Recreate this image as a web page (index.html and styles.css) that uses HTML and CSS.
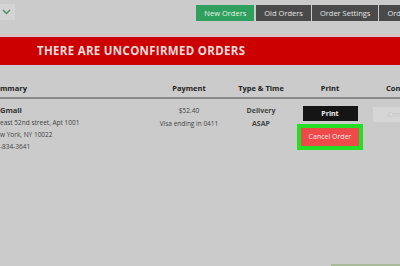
FILE: index.html
```html
<!DOCTYPE html>
<html>
<head>
<meta charset="utf-8">
<link rel="stylesheet" href="styles.css">
</head>
<body>
<div class="topbar">
  <div class="dropdown">
    <svg width="9" height="6" viewBox="0 0 9 6"><path d="M1 1 L4.5 4.5 L8 1" fill="none" stroke="#4f8a6a" stroke-width="1.4"/></svg>
  </div>
  <nav class="tabs">
    <span class="tab active">New Orders</span>
    <span class="tab">Old Orders</span>
    <span class="tab">Order Settings</span>
    <span class="tab">Order Details</span>
  </nav>
</div>
<div class="banner">THERE ARE UNCONFIRMED ORDERS</div>
<div class="table">
  <div class="row head">
    <div class="c-sum">mmary</div>
    <div class="c-mid">Payment</div>
    <div class="c-mid">Type &amp; Time</div>
    <div class="c-mid">Print</div>
    <div class="c-con">Confirm</div>
  </div>
  <div class="row body">
    <div class="c-sum">
      <div class="name">Gmail</div>
      <div class="line">east 52nd street, Apt 1001</div>
      <div class="line">w York, NY 10022</div>
      <div class="line">-834-3641</div>
    </div>
    <div class="c-mid pay">
      <div class="line">$52.40</div>
      <div class="line">Visa ending in 0411</div>
    </div>
    <div class="c-mid pay bold">
      <div class="line">Delivery</div>
      <div class="line">ASAP</div>
    </div>
    <div class="c-mid actions">
      <div class="btn print">Print</div>
      <div class="highlight"><div class="btn cancel">Cancel Order</div></div>
    </div>
    <div class="c-con">
      <div class="btn confirm">Confirm</div>
    </div>
  </div>
</div>
<div class="bottom-strip"></div>
</body>
</html>
```

FILE: styles.css
```css
html, body {
  margin: 0;
  padding: 0;
}
body {
  width: 400px;
  height: 266px;
  overflow: hidden;
  background: #cbcbcb;
  font-family: "Open Sans", "Liberation Sans", sans-serif;
  color: #333;
  position: relative;
}
.topbar {
  height: 37px;
  display: flex;
  align-items: flex-start;
  justify-content: space-between;
  padding-top: 4px;
  box-sizing: border-box;
  border-bottom: 3px solid #d8c4c4;
}
.dropdown {
  width: 15px;
  height: 16px;
  background: #d4d4d4;
  display: flex;
  align-items: center;
  justify-content: center;
  padding-right: 2px;
  box-sizing: border-box;
}
.tabs {
  display: flex;
  gap: 1px;
  margin-top: 1px;
  margin-right: -42px;
}
.tab {
  height: 16px;
  line-height: 16px;
  background: #4a4a4a;
  color: #e6e6e6;
  font-size: 7.5px;
  padding: 0 8px;
  white-space: nowrap;
}
.tab.active {
  background: #2e9f5c;
  color: #e8f4ec;
  margin-right: 1px;
}
.banner {
  height: 28px;
  line-height: 28px;
  background: #cc0000;
  color: #f2dcdc;
  font-weight: 700;
  font-size: 11.5px;
  letter-spacing: 0.3px;
  padding-left: 37px;
}
.row {
  display: grid;
  grid-template-columns: 150px 78px 66px 72px 70px;
}
.head {
  padding-top: 18px;
  height: 34px;
  box-sizing: border-box;
  font-weight: 700;
  font-size: 7.5px;
  line-height: 10px;
  color: #222;
  border-bottom: 2px solid #8a8a8a;
}
.c-mid, .c-con {
  text-align: center;
}
.c-con {
  text-align: left;
  padding-left: 20px;
}
.body {
  padding-top: 4px;
  font-size: 6.5px;
  color: #444;
}
.name {
  font-weight: 700;
  font-size: 7.5px;
  line-height: 14px;
  color: #333;
}
.line {
  line-height: 12px;
}
.pay {
  padding-top: 1px;
}
.pay .line {
  line-height: 13px;
}
.bold {
  font-weight: 700;
  font-size: 7px;
  color: #444;
}
.actions {
  display: flex;
  flex-direction: column;
  align-items: center;
}
.btn {
  height: 15px;
  line-height: 15px;
  font-size: 7px;
  text-align: center;
}
.print {
  width: 55px;
  background: #151515;
  color: #f0f0f0;
  font-weight: 700;
  margin-top: 3px;
}
.highlight {
  margin-top: 3px;
  background: #22e022;
  padding: 4px;
}
.cancel {
  width: 58px;
  height: 18px;
  line-height: 18px;
  background: #ee4a4a;
  color: #fbe6e6;
}
.confirm {
  width: 55px;
  margin-left: -13px;
  margin-top: 4px;
  background: #d6d6d6;
  color: #c4c4c4;
}
.bottom-strip {
  position: absolute;
  left: 331px;
  right: 0;
  bottom: 0;
  height: 2px;
  background: #a8ba98;
}
```
